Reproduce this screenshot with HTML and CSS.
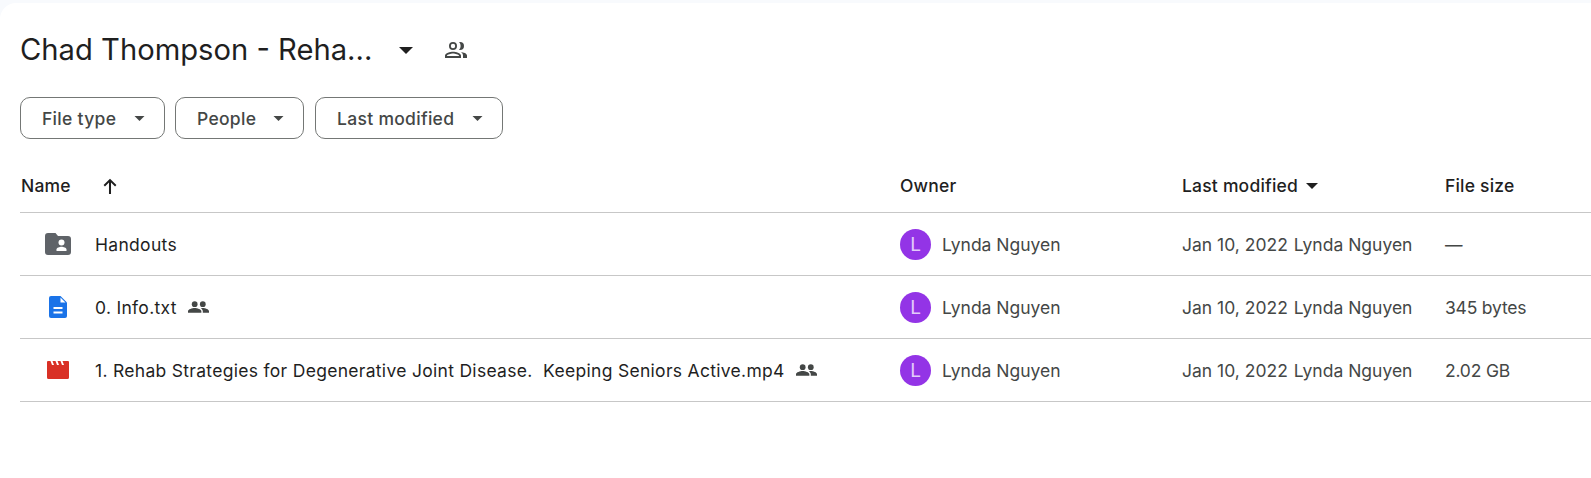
FILE: index.html
```html
<!DOCTYPE html>
<html lang="en">
<head>
<meta charset="utf-8">
<title>Chad Thompson - Rehab</title>
<link rel="stylesheet" href="styles.css">
</head>
<body>
<main class="panel">
  <header class="title-row">
    <h1 class="title">Chad Thompson - Reha...</h1>
    <svg class="title-caret" viewBox="0 0 16 8"><path d="M0 0h16L8 8z"/></svg>
    <svg class="shared-outline" viewBox="0 0 24 24"><path d="M9 12a4 4 0 1 0 0-8 4 4 0 0 0 0 8zm0-6.200a2.200 2.200 0 1 1 0 4.400 2.200 2.200 0 0 1 0-4.400zM1 20v-2.400C1 15 6.300 13.700 9 13.700s8 1.300 8 3.900V20H1zm2-1.900h12v-.5c-.4-1-3.600-2.100-6-2.100s-5.600 1.100-6 2.100v.5zM15 4.100c.3 0 .7-.1 1-.1a4 4 0 0 1 0 8c-.3 0-.7 0-1-.1 1-1 1.600-2.400 1.600-3.900S16 5.100 15 4.100zm1.900 9.900c2.600.3 6.100 1.400 6.100 3.600V20h-4v-2.400c0-1.400-.8-2.700-2.100-3.600z"/></svg>
  </header>

  <div class="filters">
    <button class="chip chip-type">File type <svg class="chip-caret" viewBox="0 0 12 6"><path d="M0 0h12L6 6z"/></svg></button>
    <button class="chip chip-people">People <svg class="chip-caret" viewBox="0 0 12 6"><path d="M0 0h12L6 6z"/></svg></button>
    <button class="chip chip-modified">Last modified <svg class="chip-caret" viewBox="0 0 12 6"><path d="M0 0h12L6 6z"/></svg></button>
  </div>

  <div class="table">
    <div class="row head">
      <div class="cell name-head">Name
        <svg class="sort-arrow" viewBox="0 0 16 16"><path d="M8 1.500 2.300 7.200l1.200 1.200L7.100 4.800V15h1.800V4.800l3.600 3.600 1.200-1.200z"/></svg>
      </div>
      <div class="cell">Owner</div>
      <div class="cell modified-head">Last modified <svg class="head-caret" viewBox="0 0 14 7"><path d="M0 0h14L7 7z"/></svg></div>
      <div class="cell">File size</div>
    </div>

    <div class="row">
      <div class="cell name">
        <span class="icon-slot"><svg class="ficon" width="26" height="22" viewBox="0 0 26 22"><path fill="#5f6368" d="M3 0h7.500L13 3h10a3 3 0 0 1 3 3v13a3 3 0 0 1-3 3H3a3 3 0 0 1-3-3V3a3 3 0 0 1 3-3z"/><circle fill="#fff" cx="16.500" cy="9.500" r="3"/><path fill="#fff" d="M11.500 18v-1.500c0-1.800 3.200-2.800 5-2.800s5 1 5 2.800V18z"/></svg></span>
        <span class="fname">Handouts</span>
      </div>
      <div class="cell owner"><span class="avatar">L</span>Lynda Nguyen</div>
      <div class="cell muted"><span class="date">Jan 10, 2022</span>Lynda Nguyen</div>
      <div class="cell muted size">—</div>
    </div>

    <div class="row">
      <div class="cell name">
        <span class="icon-slot"><svg class="ficon" width="18" height="22" viewBox="0 0 18 22"><path fill="#1a73e8" d="M2 0h9.500L18 6.500V20a2 2 0 0 1-2 2H2a2 2 0 0 1-2-2V2a2 2 0 0 1 2-2z"/><path fill="#fff" d="M11.500 1.500 16.500 6.500H11.500zM4.500 11h9v2h-9zM4.500 15.500h9v2h-9z"/></svg></span>
        <span class="fname">0. Info.txt</span>
        <svg class="shared" viewBox="0 0 22 12"><circle cx="7" cy="3" r="3"/><circle cx="15.500" cy="3" r="3"/><path d="M0 12v-1.500C0 8.300 4.500 7 7 7s7 1.300 7 3.500V12zM15.500 12v-1.500c0-1.300-.7-2.500-1.900-3.300.6-.1 1.300-.2 1.900-.2 2.500 0 6.500 1.300 6.500 3.500V12z"/></svg>
      </div>
      <div class="cell owner"><span class="avatar">L</span>Lynda Nguyen</div>
      <div class="cell muted"><span class="date">Jan 10, 2022</span>Lynda Nguyen</div>
      <div class="cell muted size">345 bytes</div>
    </div>

    <div class="row">
      <div class="cell name">
        <span class="icon-slot"><svg class="ficon" width="22" height="18" viewBox="0 0 22 18"><path fill="#d93025" d="M1 0h2.500l1.500 4h2L5.500 0h3L10 4h2l-1.500-4h3L15 4h2l-1.500-4H21a1 1 0 0 1 1 1v15.500a1.500 1.500 0 0 1-1.500 1.500h-19A1.500 1.500 0 0 1 0 16.500V1a1 1 0 0 1 1-1z"/></svg></span>
        <span class="fname">1. Rehab Strategies for Degenerative Joint Disease.&nbsp; Keeping Seniors Active.mp4</span>
        <svg class="shared" viewBox="0 0 22 12"><circle cx="7" cy="3" r="3"/><circle cx="15.500" cy="3" r="3"/><path d="M0 12v-1.500C0 8.300 4.500 7 7 7s7 1.300 7 3.500V12zM15.500 12v-1.500c0-1.300-.7-2.500-1.900-3.300.6-.1 1.300-.2 1.900-.2 2.500 0 6.500 1.300 6.500 3.500V12z"/></svg>
      </div>
      <div class="cell owner"><span class="avatar">L</span>Lynda Nguyen</div>
      <div class="cell muted"><span class="date">Jan 10, 2022</span>Lynda Nguyen</div>
      <div class="cell muted size">2.02 GB</div>
    </div>
  </div>
</main>
</body>
</html>
```

FILE: styles.css
```css
* { box-sizing: border-box; }
html, body { margin: 0; height: 100%; }
body {
  background: #f8fafd;
  padding-top: 3px;
  font-family: Inter, "Open Sans", sans-serif;
  color: #1f1f1f;
  overflow: hidden;
}
.panel {
  background: #fff;
  border-top-left-radius: 16px;
  height: 475px;
  padding-left: 20px;
}
.title-row {
  display: flex;
  align-items: center;
  height: 94px;
  padding-top: 28px;
  padding-bottom: 28px;
}
.title {
  margin: 0;
  font-size: 29.200px;
  font-weight: 400;
  line-height: 38px;
  width: 379px;
  white-space: nowrap;
}
.title-caret { width: 14px; height: 7px; fill: #1f1f1f; }
.shared-outline { width: 24px; height: 24px; margin-left: 31px; fill: #444746; }
.filters { display: flex; gap: 11px; }
.chip {
  display: flex;
  align-items: center;
  justify-content: space-between;
  height: 42px;
  border: 1px solid #747775;
  border-radius: 10px;
  background: #fff;
  color: #444746;
  font: 500 17.500px Inter, sans-serif;
  letter-spacing: .3px;
  padding: 0 19px 0 21px;
}
.chip-type { width: 145px; }
.chip-people { width: 129px; margin-left: -1px; }
.chip-modified { width: 188px; }
.chip-caret { width: 11px; height: 5px; fill: #444746; }
.table { margin-top: 12px; }
.row {
  display: grid;
  grid-template-columns: 880px 282px 263px 1fr;
  height: 63px;
  align-items: center;
  border-bottom: 1px solid #c7c7c7;
}
.row.head {
  height: 62px;
  padding-top: 8px;
  font-weight: 500;
}
.cell { display: flex; align-items: center; white-space: nowrap; font-size: 17.500px; }
.head .cell { letter-spacing: .2px; }
.name-head { padding-left: 1px; }
.sort-arrow { width: 18px; height: 18px; margin-left: 30px; fill: #1f1f1f; }
.modified-head { gap: 8px; }
.head-caret { width: 12px; height: 6px; fill: #1f1f1f; }
.icon-slot { width: 75px; display: flex; justify-content: center; flex: none; }
.fname { font-weight: 400; letter-spacing: .3px; color: #1f1f1f; }
.shared { width: 21px; height: 12px; margin-left: 11px; fill: #444746; }
.owner, .muted { color: #444746; }
.size { letter-spacing: -.2px; }
.avatar {
  width: 31px;
  height: 31px;
  border-radius: 50%;
  background: #9334e6;
  color: #e3ccf9;
  display: flex;
  align-items: center;
  justify-content: center;
  font-size: 19px;
  margin-right: 11px;
  flex: none;
}
.date { margin-right: 6px; }
```
